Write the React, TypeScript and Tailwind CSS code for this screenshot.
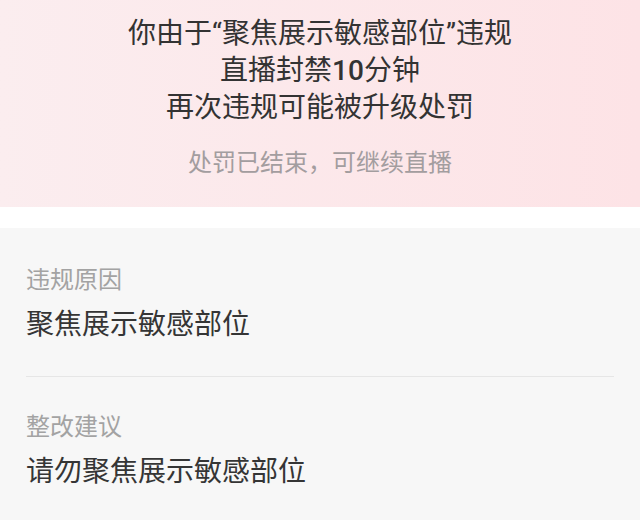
import React from 'react';

const font = { fontFamily: 'Roboto, "Noto Sans CJK SC", sans-serif' };

const Section: React.FC<{ label: string; value: string }> = ({ label, value }) => (
  <div>
    <div className="text-[24px] leading-[32px] text-[#a3a3a3]">{label}</div>
    <div className="mt-[11px] text-[28px] leading-[36px] text-[#353535]">{value}</div>
  </div>
);

const App: React.FC = () => {
  return (
    <div className="w-[640px] h-[520px] overflow-hidden bg-white flex flex-col" style={font}>
      {/* Banner */}
      <div className="h-[207px] bg-gradient-to-r from-[#fbedef] to-[#fde3e6] pt-[15px] flex flex-col items-center text-center">
        <div className="text-[28px] leading-[37px] text-[#333333]">
          <p>你由于“聚焦展示敏感部位”违规</p>
          <p>
            直播封禁<span className="font-medium">10</span>分钟
          </p>
          <p>再次违规可能被升级处罚</p>
        </div>
        <p className="mt-[21px] text-[24px] leading-[32px] text-[#a39d9f]">处罚已结束，可继续直播</p>
      </div>

      <div className="h-[21px] bg-white" />

      {/* Details */}
      <div className="flex-1 bg-[#f7f7f7] px-[26px] pt-[36px]">
        <Section label="违规原因" value="聚焦展示敏感部位" />
        <div className="mt-[33px] h-px bg-[#e6e6e6]" />
        <div className="pt-[34px]">
          <Section label="整改建议" value="请勿聚焦展示敏感部位" />
        </div>
      </div>
    </div>
  );
};

export default App;
